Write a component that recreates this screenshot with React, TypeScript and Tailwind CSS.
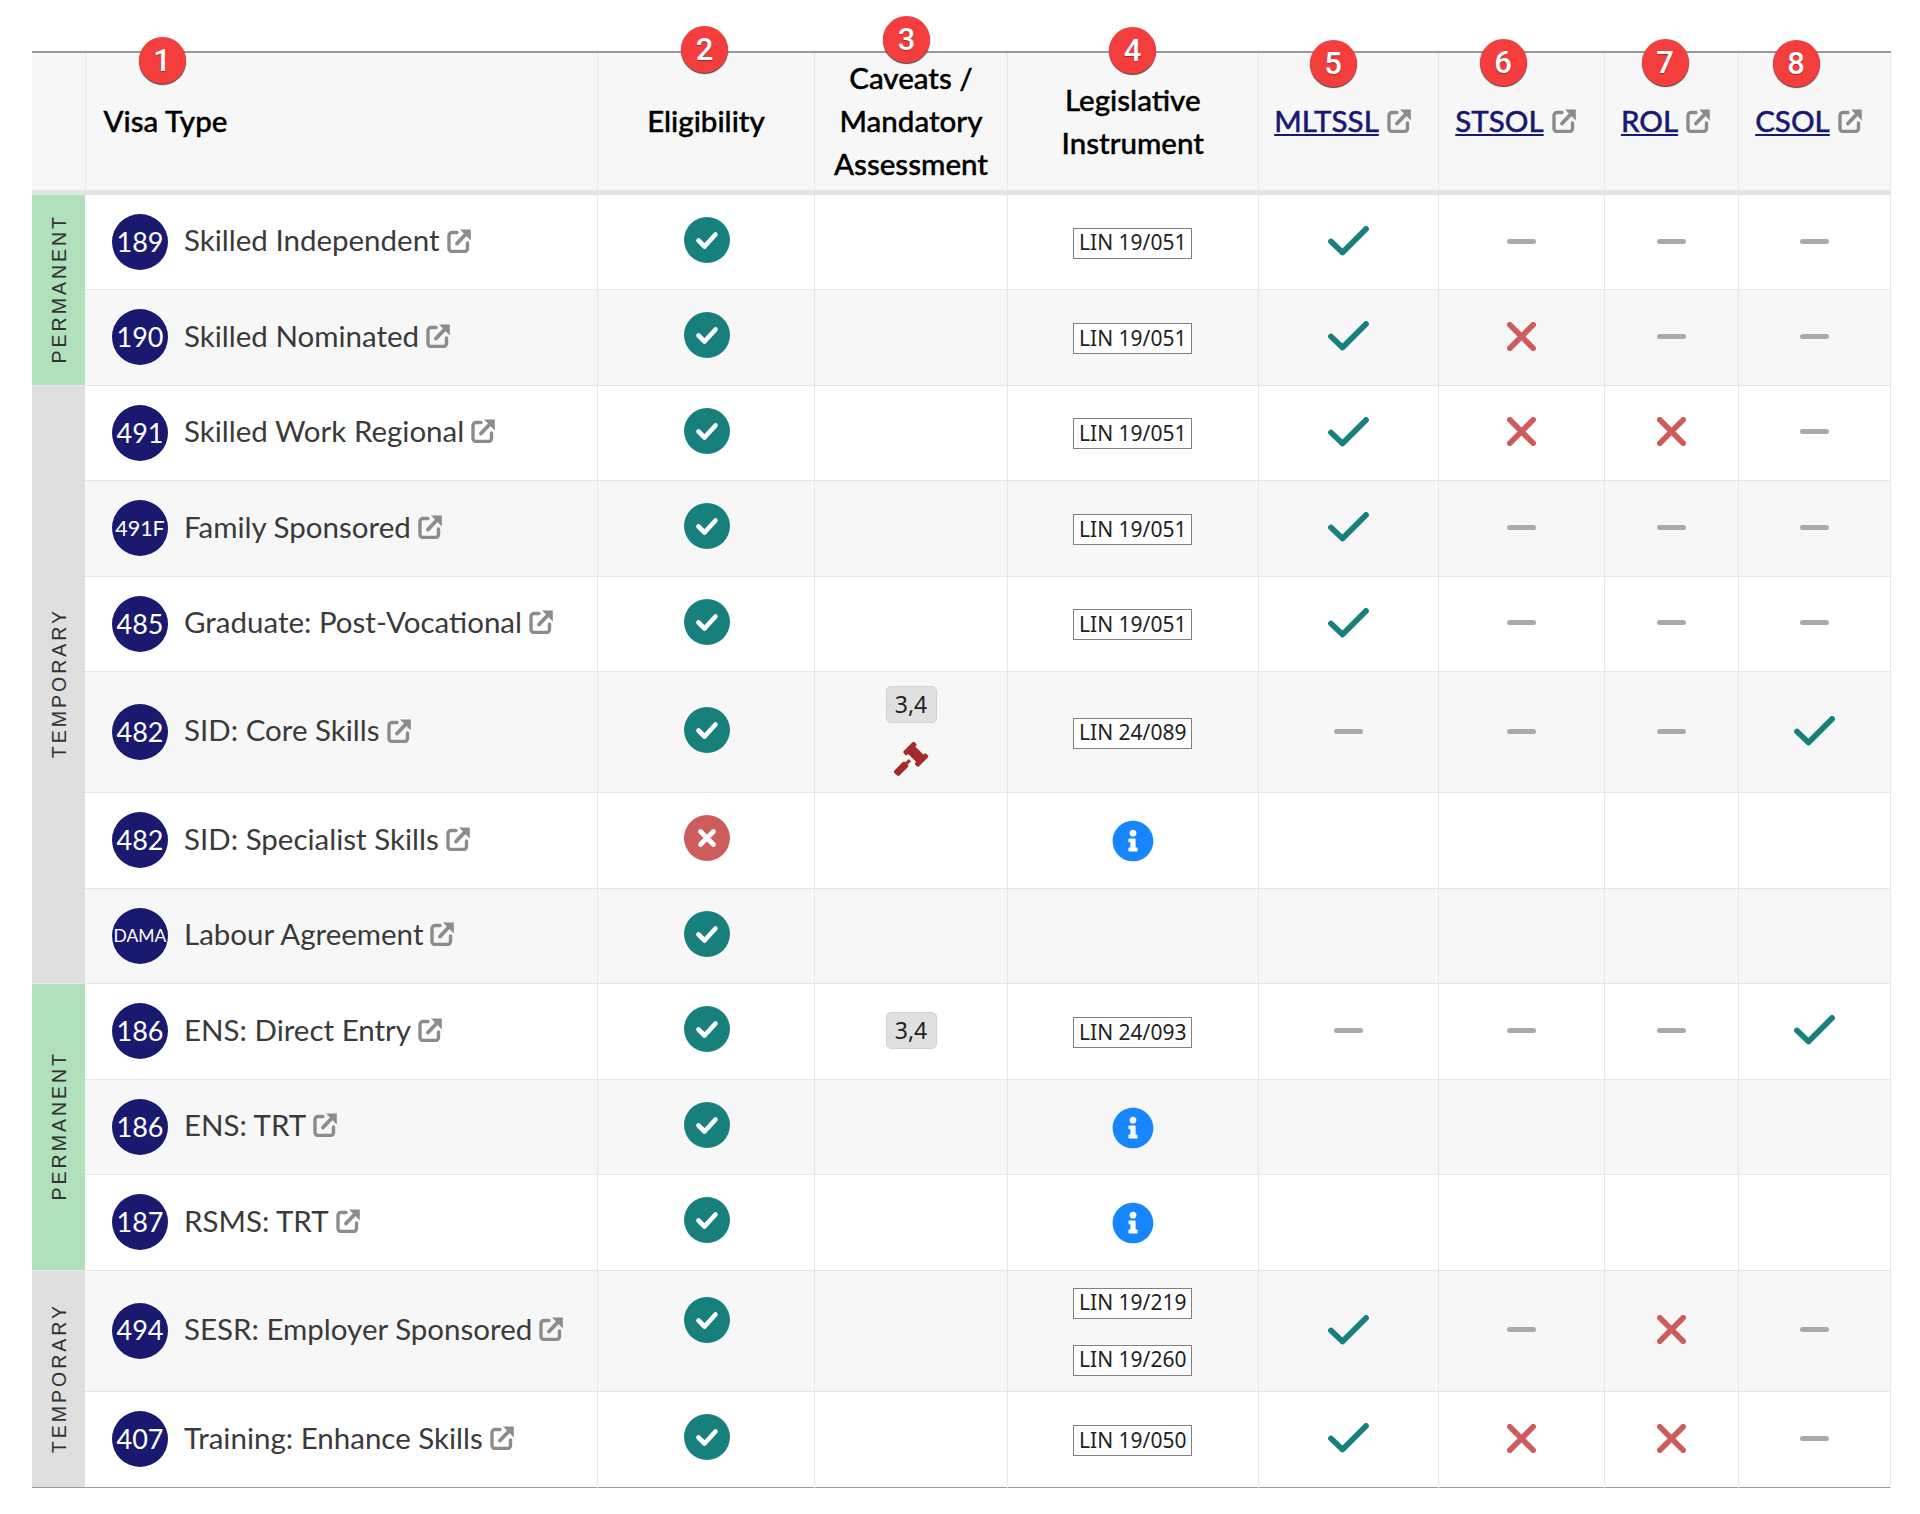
import React from 'react';
import { FaInfoCircle } from 'react-icons/fa';

type Mark = 'y' | 'n' | '-' | '';

interface Visa {
  code: string;
  codeClass?: string;
  name: string;
  ok: boolean;
  caveat?: string;
  gavel?: boolean;
  lins: string[];
  info?: boolean;
  marks: Mark[];
  rowClass: string;
}

const mainFont = "font-['Lato','Noto_Sans',sans-serif]";

const ExtLink = () => (
  <svg viewBox="0 0 24 24" className="w-[24px] h-[24px] shrink-0 text-[#8c8c8c]" fill="none" stroke="currentColor">
    <path d="M10 3.500H5A3 3 0 0 0 2 6.500V19.500a3 3 0 0 0 3 3h12.500a3 3 0 0 0 3-3v-5.500" strokeWidth="3.400" strokeLinecap="round" />
    <path d="M10 14.500 19 5" strokeWidth="3.800" strokeLinecap="round" />
    <path d="M13 0.600H23.800V11.400Z" fill="currentColor" stroke="none" />
  </svg>
);

const Tick = () => (
  <svg viewBox="0 0 41 30" className="w-[41px] h-[30px]" fill="none" stroke="#17807c" strokeWidth="5.800" strokeLinecap="round" strokeLinejoin="round">
    <path d="M3 15.500 14.500 26.500 38 3" />
  </svg>
);

const Cross = () => (
  <svg viewBox="0 0 29 29" className="w-[29px] h-[29px]" fill="none" stroke="#cd5c5c" strokeWidth="5.600" strokeLinecap="round">
    <path d="M2.800 2.800 26.200 26.200M26.200 2.800 2.800 26.200" />
  </svg>
);

const Dash = () => <div className="w-[29px] h-[5px] rounded-[3px] bg-[#aaaaaa]" />;

const Gavel = () => (
  <svg viewBox="0 0 35 35" className="w-[36px] h-[36px] overflow-visible" fill="#a52a2a">
    <g transform="rotate(45 17.500 17.500)">
      <rect x="7" y="3.500" width="5" height="15" rx="1.500" />
      <rect x="23" y="3.500" width="5" height="15" rx="1.500" />
      <rect x="10" y="6" width="15" height="10" />
      <rect x="16" y="19" width="3" height="6" />
      <rect x="14" y="23.500" width="7" height="15" rx="2" />
    </g>
  </svg>
);

const StatusIcon = ({ ok }: { ok: boolean }) => (
  <svg viewBox="0 0 46 46" className="w-[46px] h-[46px] ml-[1px]" fill="none">
    <circle cx="23" cy="23" r="23" fill={ok ? '#17807c' : '#cd5c5c'} />
    {ok
      ? <path d="M14.500 23.500 20.500 29.500 31.500 17.500" stroke="#ffffff" strokeWidth="4.600" strokeLinecap="round" strokeLinejoin="round" />
      : <path d="M16.500 16.500 29.500 29.500M29.500 16.500 16.500 29.500" stroke="#ffffff" strokeWidth="4.800" strokeLinecap="round" />}
  </svg>
);

const MarkCell = ({ mark }: { mark: Mark }) => (
  <td className="border-r border-[#e8e8e8] p-0">
    <div className="flex justify-center items-center mb-[2px]">
      {mark === 'y' && <Tick />}
      {mark === 'n' && <Cross />}
      {mark === '-' && <Dash />}
    </div>
  </td>
);

const Badge = ({ n, className }: { n: number; className: string }) => (
  <span
    className={`absolute w-[47px] h-[47px] rounded-full bg-[#f43d3d] flex items-center justify-center text-white text-[31px] font-medium font-['Roboto',sans-serif] [-webkit-text-stroke:0] shadow-[0_1px_1px_rgba(0,0,0,0.75)] [text-shadow:0_1px_1px_rgba(0,0,0,0.35)] ${className}`}
  >
    {n}
  </span>
);

const listHeaders = [
  { label: 'MLTSSL', badge: 5, pos: 'left-[51px] top-[-13px]' },
  { label: 'STSOL', badge: 6, pos: 'left-[41px] top-[-14px]' },
  { label: 'ROL', badge: 7, pos: 'left-[37px] top-[-14px]' },
  { label: 'CSOL', badge: 8, pos: 'left-[34px] top-[-13px]' },
];

const rowH = 'h-[95.500px]';

const visas: Visa[] = [
  { code: '189', name: 'Skilled Independent', ok: true, lins: ['LIN 19/051'], marks: ['y', '-', '-', '-'], rowClass: 'h-[97px]' },
  { code: '190', name: 'Skilled Nominated', ok: true, lins: ['LIN 19/051'], marks: ['y', 'n', '-', '-'], rowClass: rowH },
  { code: '491', name: 'Skilled Work Regional', ok: true, lins: ['LIN 19/051'], marks: ['y', 'n', 'n', '-'], rowClass: rowH },
  { code: '491F', codeClass: 'text-[21.500px]', name: 'Family Sponsored', ok: true, lins: ['LIN 19/051'], marks: ['y', '-', '-', '-'], rowClass: rowH },
  { code: '485', name: 'Graduate: Post-Vocational', ok: true, lins: ['LIN 19/051'], marks: ['y', '-', '-', '-'], rowClass: rowH },
  { code: '482', name: 'SID: Core Skills', ok: true, caveat: '3,4', gavel: true, lins: ['LIN 24/089'], marks: ['-', '-', '-', 'y'], rowClass: 'h-[121px]' },
  { code: '482', name: 'SID: Specialist Skills', ok: false, lins: [], info: true, marks: ['', '', '', ''], rowClass: rowH },
  { code: 'DAMA', codeClass: 'text-[17.500px]', name: 'Labour Agreement', ok: true, lins: [], marks: ['', '', '', ''], rowClass: rowH },
  { code: '186', name: 'ENS: Direct Entry', ok: true, caveat: '3,4', lins: ['LIN 24/093'], marks: ['-', '-', '-', 'y'], rowClass: rowH },
  { code: '186', name: 'ENS: TRT', ok: true, lins: [], info: true, marks: ['', '', '', ''], rowClass: rowH },
  { code: '187', name: 'RSMS: TRT', ok: true, lins: [], info: true, marks: ['', '', '', ''], rowClass: rowH },
  { code: '494', name: 'SESR: Employer Sponsored', ok: true, lins: ['LIN 19/219', 'LIN 19/260'], marks: ['y', '-', 'n', '-'], rowClass: 'h-[121px]' },
  { code: '407', name: 'Training: Enhance Skills', ok: true, lins: ['LIN 19/050'], marks: ['y', 'n', 'n', '-'], rowClass: 'h-[96.500px]' },
];

// group label cells, keyed by the row they start on
const groups: Record<number, { label: string; span: number; color: string }> = {
  0: { label: 'PERMANENT', span: 2, color: 'bg-[#b0e0bc]' },
  2: { label: 'TEMPORARY', span: 6, color: 'bg-[#dfdfdf]' },
  8: { label: 'PERMANENT', span: 3, color: 'bg-[#b0e0bc]' },
  11: { label: 'TEMPORARY', span: 2, color: 'bg-[#dfdfdf]' },
};

const thClass = 'relative bg-[#f7f7f7] border-r border-[#e8e8e8] font-medium p-0 pb-[2px] text-center text-black [-webkit-text-stroke:0.4px_currentColor]';

export default function App() {
  return (
    <div className={`pt-[51px] pl-[32px] pb-[25px] bg-white ${mainFont}`}>
      <table className="table-fixed w-[1858px] border-collapse border-t-[2px] border-[#999999] text-[#3a3a3a] text-[29.500px]">
        <colgroup>
          <col className="w-[53px]" />
          <col className="w-[512.500px]" />
          <col className="w-[217px]" />
          <col className="w-[193px]" />
          <col className="w-[250.500px]" />
          <col className="w-[180px]" />
          <col className="w-[166px]" />
          <col className="w-[134px]" />
          <col className="w-[152px]" />
        </colgroup>
        <thead>
          <tr className="h-[140.500px] border-b-[5px] border-[#e4e4e4] leading-[43px]">
            <th className={thClass} />
            <th className={`${thClass} text-left pl-[18px]`}>
              <Badge n={1} className="left-[53px] top-[-16px]" />
              Visa Type
            </th>
            <th className={thClass}>
              <Badge n={2} className="left-[83px] top-[-27px]" />
              Eligibility
            </th>
            <th className={thClass}>
              <Badge n={3} className="left-[68px] top-[-37px]" />
              Caveats /<br />Mandatory<br />Assessment
            </th>
            <th className={thClass}>
              <Badge n={4} className="left-[101px] top-[-26px]" />
              Legislative<br />Instrument
            </th>
            {listHeaders.map(h => (
              <th key={h.label} className={thClass}>
                <Badge n={h.badge} className={h.pos} />
                <div className="flex items-center justify-center gap-[8px] pr-[11px]">
                  <span className="underline text-[#191970]">{h.label}</span>
                  <ExtLink />
                </div>
              </th>
            ))}
          </tr>
        </thead>
        <tbody>
          {visas.map((v, i) => (
            <tr
              key={v.name}
              className={`${v.rowClass} border-b border-[#e8e8e8] last:border-[#999999] ${i % 2 ? 'bg-[#f7f7f7]' : 'bg-white'}`}
            >
              {groups[i] && (
                <td rowSpan={groups[i].span} className={`${groups[i].color} p-0`}>
                  <div className="flex justify-center pl-[3px] pb-[2px]">
                    <span className="[writing-mode:vertical-rl] rotate-180 text-[19.500px] tracking-[3px] text-[#333333] leading-none font-['Liberation_Sans',sans-serif]">
                      {groups[i].label}
                    </span>
                  </div>
                </td>
              )}
              <td className="border-r border-[#e8e8e8] pl-[27px] p-0">
                <div className="flex items-center gap-[16px]">
                  <span className={`w-[56px] h-[56px] rounded-full bg-[#191970] text-white flex items-center justify-center shrink-0 ${v.codeClass ?? 'text-[27px]'}`}>
                    {v.code}
                  </span>
                  <span className="flex items-center gap-[7px] mb-[3px]">
                    {v.name}
                    <ExtLink />
                  </span>
                </div>
              </td>
              <td className="border-r border-[#e8e8e8] p-0">
                <div className={`flex justify-center ${v.lins.length > 1 ? 'mb-[22px]' : 'mb-[4px]'}`}>
                  <StatusIcon ok={v.ok} />
                </div>
              </td>
              <td className="border-r border-[#e8e8e8] p-0">
                <div className="flex flex-col items-center gap-[18px] mb-[2px]">
                  {v.caveat && (
                    <span className="w-[51px] h-[37px] flex items-center justify-center bg-[#e0e0e0] border border-[#d2d2d2] rounded-[5px] text-[23px] text-[#222222] font-['Noto_Sans',sans-serif]">
                      {v.caveat}
                    </span>
                  )}
                  {v.gavel && <Gavel />}
                </div>
              </td>
              <td className="border-r border-[#e8e8e8] p-0">
                <div className="flex flex-col items-center gap-[26px] pt-[2px]">
                  {v.lins.map(l => (
                    <span key={l} className="w-[119px] h-[31px] flex items-center justify-center bg-white border border-[#808080] text-[21px] text-[#222222] font-['Noto_Sans',sans-serif]">
                      {l}
                    </span>
                  ))}
                  {v.info && <FaInfoCircle className="w-[42px] h-[42px] text-[#1785fb]" />}
                </div>
              </td>
              {v.marks.map((m, j) => <MarkCell key={j} mark={m} />)}
            </tr>
          ))}
        </tbody>
      </table>
    </div>
  );
}
